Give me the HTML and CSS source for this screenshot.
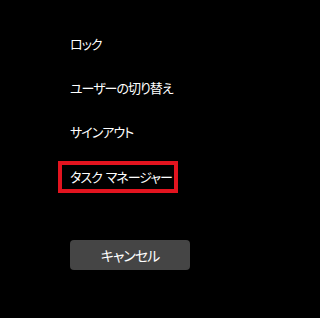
FILE: index.html
```html
<!DOCTYPE html>
<html lang="ja">
<head>
<meta charset="utf-8">
<link rel="stylesheet" href="styles.css">
</head>
<body>
<div class="screen">
  <nav class="menu">
    <div class="item">ロック</div>
    <div class="item">ユーザーの切り替え</div>
    <div class="item">サインアウト</div>
    <div class="item highlight">タスク マネージャー</div>
  </nav>
  <button class="cancel">キャンセル</button>
</div>
</body>
</html>
```
FILE: styles.css
```css
html, body {
  margin: 0;
  padding: 0;
  background: #000;
}
.screen {
  width: 264px;
  height: 318px;
  box-sizing: border-box;
  padding: 32px 0 0 70px;
  display: flex;
  flex-direction: column;
  align-items: flex-start;
  font-family: "Noto Sans CJK JP", "Noto Sans", sans-serif;
  font-feature-settings: "palt";
  color: #fff;
}
.menu {
  display: flex;
  flex-direction: column;
  align-items: flex-start;
  gap: 20px;
}
.item {
  font-size: 13px;
  letter-spacing: -1px;
  line-height: 24px;
  height: 24px;
  white-space: nowrap;
}
.highlight {
  border: 4px solid #e3141f;
  padding: 0 2px 0 8px;
  margin: -3px 0 0 -12px;
  word-spacing: 2px;
}
.cancel {
  margin-top: 47px;
  width: 120px;
  height: 30px;
  border: none;
  border-radius: 4px;
  background: #454545;
  color: #fff;
  font-family: inherit;
  font-feature-settings: "palt";
  font-size: 14px;
  letter-spacing: -1px;
  padding: 0;
}
```
